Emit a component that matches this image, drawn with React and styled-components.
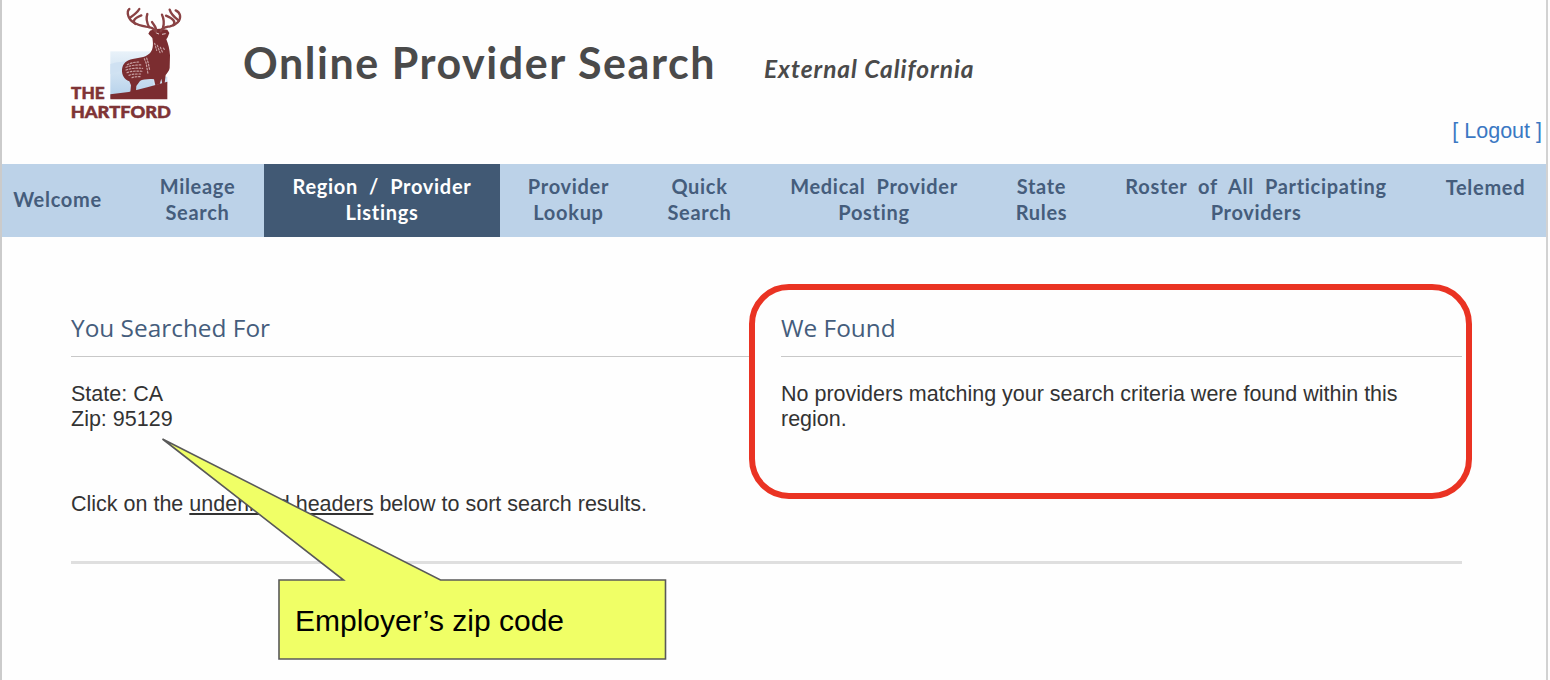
import React from 'react';
import styled, {createGlobalStyle} from 'styled-components';

const navItems = [
	{lines: ['Welcome'], width: 130, pad: 19},
	{lines: ['Mileage', 'Search'], width: 131},
	{lines: ['Region / Provider', 'Listings'], width: 236, active: true},
	{lines: ['Provider', 'Lookup'], width: 137},
	{lines: ['Quick', 'Search'], width: 125},
	{lines: ['Medical Provider', 'Posting'], width: 224},
	{lines: ['State', 'Rules'], width: 111},
	{lines: ['Roster of All Participating', 'Providers'], width: 318},
	{lines: ['Telemed'], width: 141, top: true},
];

const HartfordLogo = () => (
	<LogoSvg viewBox="0 0 405 375">
		<defs>
			<linearGradient id="sky" x1="0" y1="0" x2="0" y2="1">
				<stop offset="0" stopColor="#e9f2f9" />
				<stop offset="1" stopColor="#b4d0ea" />
			</linearGradient>
		</defs>
		<rect x="151" y="154" width="130" height="140" fill="url(#sky)" />
		<path d="M280 230 H322 V250 L280 262 Z" fill="#cfe1f2" />
		<path d="M151 192 C175 184 190 188 205 180 L185 212 L151 222 Z" fill="#cfe1f2" />
		{/* 바위 */}
		<path d="M151 283 L206 276 L262 262 L322 245 L322 298 L151 298 Z" fill="#7b2d30" />
		{/* 몸통 */}
		<path
			d="M270 92 L284 87 L302 86 L322 89 L328 99 L323 112 L319 118 C325 132 329 148 330 166 L329 204 C327 214 322 218 317 225 L314 249 L307 252 L304 236 L299 253 L286 256 L282 238 C268 236 248 238 240 243 L229 258 L228 273 L211 277 L213 256 L208 244 C193 238 185 226 186 208 C188 190 200 180 218 177 C240 174 262 171 272 157 C280 145 280 130 277 114 L265 101 Z"
			fill="#7b2d30"
		/>
		{/* 뿔 */}
		<g fill="none" stroke="#8a4244" strokeWidth="7" strokeLinecap="round" strokeLinejoin="round">
			<path d="M288 96 C282 84 273 82 258 80 C235 76 210 66 205 48 C202 38 204 30 208 27" />
			<path d="M210 53 C222 45 232 38 238 27" />
			<path d="M226 72 C217 64 221 55 244 46" />
			<path d="M268 82 C260 68 257 56 262 42" />
			<path d="M302 94 C306 82 316 82 330 79 C350 74 363 62 360 46 C358 37 352 33 347 31" />
			<path d="M357 62 C346 54 334 46 329 29" />
			<path d="M340 75 C348 65 340 56 318 47" />
			<path d="M309 83 C313 70 311 55 306 44" />
			<path d="M288 94 C290 80 280 74 276 66" />
		</g>
		<g
			fill="none"
			stroke="#c9a3a5"
			strokeWidth="3.5"
			strokeDasharray="5 5"
			strokeLinecap="round"
		>
			<path d="M202 194 C214 188 226 186 238 186" />
			<path d="M198 202 C212 196 230 194 246 195" />
			<path d="M198 210 C214 204 232 204 248 205" />
			<path d="M201 218 C216 212 234 213 250 214" />
			<path d="M207 226 C220 221 234 222 246 222" />
			<path d="M216 233 C222 230 232 230 240 230" />
			<path d="M253 176 L258 188 L261 204 L264 222" />
			<path d="M260 174 L265 190 L269 210" />
			<path d="M284 130 L290 151" />
			<path d="M292 136 L300 158" />
			<path d="M301 142 L309 160" />
			<path d="M310 144 L316 152" />
		</g>
		<path d="M289 99 L297 102 M306 103 L317 101" stroke="#e0c8c8" strokeWidth="3" />
		<g
			fill="#7f3436"
			stroke="#7f3436"
			strokeWidth="1.5"
			fontFamily="Lato, sans-serif"
			fontWeight="900"
			fontSize="52"
		>
			<text x="33" y="298" textLength="101" lengthAdjust="spacingAndGlyphs">THE</text>
			<text x="32" y="353" textLength="301" lengthAdjust="spacingAndGlyphs">HARTFORD</text>
		</g>
	</LogoSvg>
);

const App = () => {
	return (
		<>
			<GlobalStyle />
			<Page>
				<Header>
					<HartfordLogo />
					<Title>Online Provider Search</Title>
					<SubTitle>External California</SubTitle>
				</Header>
				<LogoutRow>
					<LogoutLink>[ Logout ]</LogoutLink>
				</LogoutRow>
				<Nav>
					{navItems.map((item, i) => (
						<NavItem
							key={i}
							$width={item.width}
							$active={item.active}
							$pad={item.pad}
							$top={item.top}
						>
							{item.lines.map((line) => (
								<span key={line}>{line}</span>
							))}
						</NavItem>
					))}
				</Nav>
				<Content>
					<Columns>
						<Column>
							<Heading>You Searched For</Heading>
							<Text>
								State: CA
								<br />
								Zip: 95129
							</Text>
						</Column>
						<Column>
							<Heading>We Found</Heading>
							<Text>
								No providers matching your search criteria were found within this region.
							</Text>
							<Highlight />
						</Column>
					</Columns>
					<SortHint>
						Click on the <u>underlined headers</u> below to sort search results.
					</SortHint>
					<Divider />
				</Content>
				<Callout>
					<CalloutShape viewBox="0 0 506 224">
						<path
							d="M1.5 2 L182.5 143 H118 V222 H504.5 V143 H279.5 Z"
							fill="#f0ff66"
							stroke="#595959"
							strokeWidth="1.6"
						/>
					</CalloutShape>
					<CalloutText>Employer’s zip code</CalloutText>
				</Callout>
			</Page>
		</>
	);
};

export default App;

const GlobalStyle = createGlobalStyle`
	* {
		box-sizing: border-box;
	}
	body {
		margin: 0;
		background-color: #fefefe;
		overflow: hidden;
	}
`;

const Page = styled.div`
	position: relative;
	width: 1548px;
	height: 680px;
	border-left: 2px solid #cbcbcb;
	border-right: 2px solid #d2d2d2;
	background-color: #fefefe;
	font-family: 'Liberation Sans', Arial, sans-serif;
	color: #333;
	overflow: hidden;
`;

const Header = styled.header`
	display: flex;
	align-items: flex-start;
	height: 118px;
	padding-left: 58px;
	font-family: Lato, sans-serif;
	color: #4a4a4a;
	white-space: nowrap;
`;

const LogoSvg = styled.svg`
	flex: none;
	width: 135px;
	height: 125px;
`;

const Title = styled.h1`
	width: 520px;
	margin: 37px 0 0 48px;
	font-size: 43px;
	line-height: 52px;
	font-weight: 700;
	letter-spacing: 1.55px;
`;

const SubTitle = styled.h2`
	margin: 54px 0 0 1px;
	font-size: 24.5px;
	line-height: 30px;
	font-weight: 700;
	font-style: italic;
	letter-spacing: 0.95px;
`;

const LogoutRow = styled.div`
	display: flex;
	justify-content: flex-end;
	height: 46px;
	padding-right: 4px;
`;

const LogoutLink = styled.a`
	font-size: 21.5px;
	line-height: 26px;
	color: #3b78c3;
`;

const Nav = styled.nav`
	display: flex;
	height: 73px;
	background-color: #bcd2e8;
`;

const NavItem = styled.a`
	display: flex;
	flex: none;
	flex-direction: column;
	align-items: center;
	justify-content: ${({$top}) => ($top ? 'flex-start' : 'center')};
	width: ${({$width}) => $width}px;
	padding: ${({$top}) => ($top ? '10px' : '0')} ${({$pad}) => $pad || 0}px 3px 0;
	font-family: Lato, sans-serif;
	font-size: 20px;
	line-height: 26px;
	font-weight: 700;
	letter-spacing: 0.7px;
	word-spacing: 5.5px;
	white-space: nowrap;
	color: ${({$active}) => ($active ? '#fff' : '#455d7c')};
	background-color: ${({$active}) => ($active ? '#415974' : 'transparent')};

	&:nth-child(2) {
		margin-right: 1px;
	}
`;

const Content = styled.main`
	padding: 72px 84px 0 69px;
`;

const Columns = styled.div`
	display: grid;
	grid-template-columns: 680px 681px;
	column-gap: 30px;
	height: 182px;
`;

const Column = styled.section`
	position: relative;
`;

const Heading = styled.h3`
	height: 48px;
	margin: 0 0 25px;
	border-bottom: 1.5px solid #c8c8c8;
	font-family: 'Open Sans', sans-serif;
	font-size: 24.4px;
	line-height: 38px;
	font-weight: 400;
	color: #455d7c;
`;

const Text = styled.p`
	margin: 0;
	font-size: 21.5px;
	line-height: 24.5px;
`;

const Highlight = styled.div`
	position: absolute;
	top: -25px;
	left: -32px;
	width: 723px;
	height: 215px;
	border: 6.5px solid #ea3323;
	border-radius: 40px;
`;

const SortHint = styled.p`
	margin: 0;
	padding-top: 1px;
	font-size: 21.5px;
	line-height: 25px;

	u {
		text-decoration-thickness: 1.5px;
		text-underline-offset: 2px;
		text-decoration-skip-ink: none;
	}
`;

const Divider = styled.hr`
	height: 3px;
	margin: 44px 0 0;
	border: none;
	background-color: #dfdfdf;
`;

const Callout = styled.div`
	position: absolute;
	top: 437px;
	left: 159px;
	width: 506px;
	height: 224px;
`;

const CalloutShape = styled.svg`
	display: block;
	width: 506px;
	height: 224px;
`;

const CalloutText = styled.div`
	position: absolute;
	top: 166px;
	left: 134px;
	font-size: 30px;
	line-height: 36px;
	color: #000;
	white-space: nowrap;
`;
